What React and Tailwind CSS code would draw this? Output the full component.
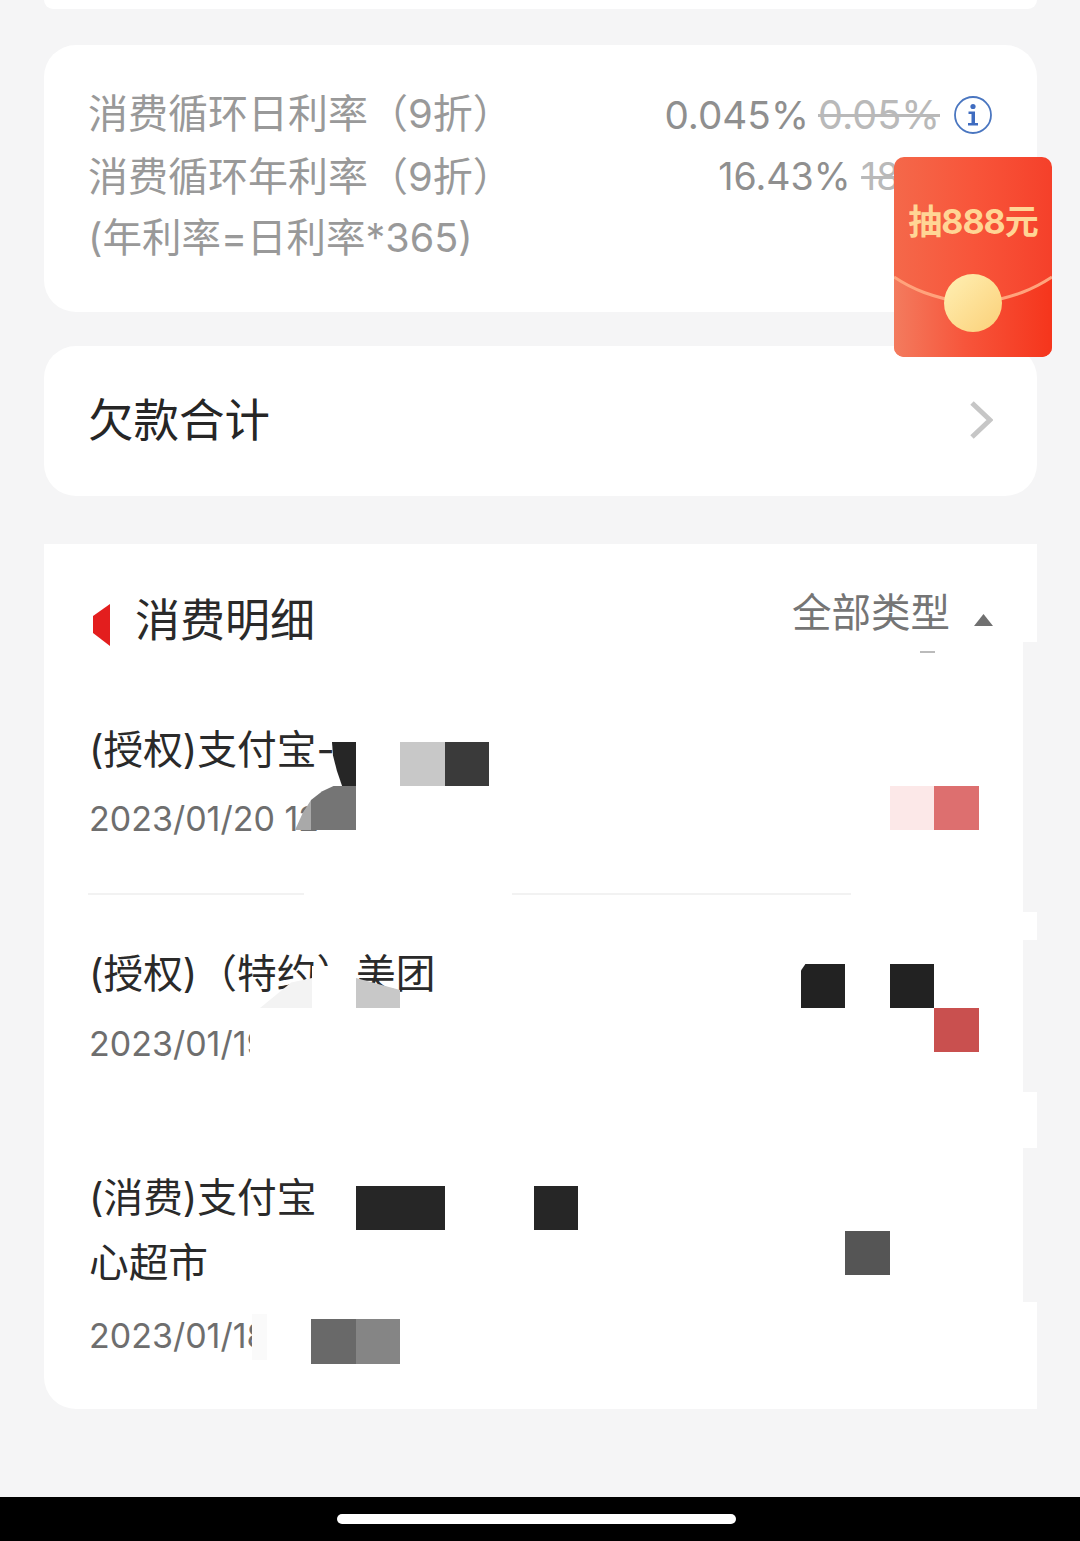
import React from 'react';

const cjk = "font-['Inter','Noto_Sans_CJK_SC',sans-serif]";

// Mosaic patches painted over the private parts of the list (page coordinates minus section origin)
const patches = [
  'left-[288px] top-[198px] w-[24px] h-[44px] bg-[#262626] [clip-path:polygon(0_0,100%_0,100%_100%,42%_100%,20%_65%,4%_30%)]',
  'left-[251px] top-[242px] w-[16px] h-[44px] bg-[#a9a9a9] [clip-path:polygon(0_100%,50%_60%,100%_32%,100%_100%)]',
  'left-[267px] top-[242px] w-[45px] h-[44px] bg-[#757575] [clip-path:polygon(0_32%,25%_12%,50%_0,100%_0,100%_100%,0_100%)]',
  'left-[356px] top-[198px] w-[45px] h-[44px] bg-[#c8c8c8]',
  'left-[401px] top-[198px] w-[44px] h-[44px] bg-[#3a3a3a]',
  'left-[846px] top-[242px] w-[44px] h-[44px] bg-[#fce8e8]',
  'left-[890px] top-[242px] w-[45px] h-[44px] bg-[#dd6f6f]',
  'left-[260px] top-[349px] w-[208px] h-[2px] bg-white',
  'left-[216px] top-[434px] w-[52px] h-[30px] bg-[#f3f3f3] [clip-path:polygon(0_100%,60%_15%,100%_0,100%_100%)]',
  'left-[268px] top-[422px] w-[44px] h-[42px] bg-white',
  'left-[312px] top-[434px] w-[44px] h-[30px] bg-[#c8c8c8] [clip-path:polygon(0_0,100%_40%,100%_100%,0_100%)]',
  'left-[757px] top-[420px] w-[44px] h-[44px] bg-[#222222] [clip-path:polygon(10%_0,100%_0,100%_100%,0_100%,0_15%)]',
  'left-[846px] top-[420px] w-[44px] h-[44px] bg-[#222222]',
  'left-[890px] top-[464px] w-[45px] h-[44px] bg-[#c9504f]',
  'left-[206px] top-[478px] w-[120px] h-[48px] bg-white',
  'left-[312px] top-[642px] w-[89px] h-[44px] bg-[#262626]',
  'left-[490px] top-[642px] w-[44px] h-[44px] bg-[#262626]',
  'left-[801px] top-[687px] w-[45px] h-[44px] bg-[#555555]',
  'left-[208px] top-[770px] w-[15px] h-[46px] bg-[#fafafa]',
  'left-[223px] top-[770px] w-[44px] h-[46px] bg-white',
  'left-[267px] top-[775px] w-[45px] h-[45px] bg-[#696969]',
  'left-[312px] top-[775px] w-[44px] h-[45px] bg-[#858585]',
  'left-[876px] top-[107px] w-[15px] h-[2px] bg-[#bbbbbb]',
];

// Grey strips where the white card is cut back on its right edge
const strips = [
  'top-[98px] h-[270px]',
  'top-[396px] h-[152px]',
  'top-[604px] h-[154px]',
];

const RedPacket = () => (
  <div className="absolute left-[894px] top-[157px] w-[158px] h-[200px] rounded-[10px] overflow-hidden bg-gradient-to-r from-[#f4684a] via-[#f8553a] to-[#f5402a]">
    <div className={`${cjk} pt-[46px] text-center text-[34px] leading-[38px] font-bold tracking-[-1px] text-[#ffd595] whitespace-nowrap`}>抽888元</div>
    <svg className="absolute left-0 top-[110px]" width="158" height="90" viewBox="0 0 158 90">
      <defs>
        <linearGradient id="seal" x1="0" y1="0" x2="1" y2="1">
          <stop offset="0" stopColor="#fff0b4" />
          <stop offset="1" stopColor="#fbd078" />
        </linearGradient>
        <linearGradient id="flap" x1="0" y1="0" x2="1" y2="0">
          <stop offset="0" stopColor="#f37b5e" />
          <stop offset="0.45" stopColor="#f7553b" />
          <stop offset="1" stopColor="#f5351c" />
        </linearGradient>
      </defs>
      <path d="M0 10 C18 22 36 30 79 38 C122 30 140 22 158 10 V90 H0 Z" fill="url(#flap)" />
      <path d="M0 10 C18 22 36 30 79 38 C122 30 140 22 158 10" fill="none" stroke="#ffa37c" strokeWidth="3" />
      <circle cx="79" cy="36" r="29" fill="url(#seal)" />
    </svg>
  </div>
);

const InfoIcon = () => (
  <svg width="38" height="38" viewBox="0 0 38 38" className="shrink-0">
    <circle cx="19" cy="19" r="18" fill="none" stroke="#4a76c0" strokeWidth="1.8" />
    <circle cx="19" cy="10.5" r="2.6" fill="#3f6cc0" />
    <path d="M14.5 15.5 H21 V27 H24 V29.5 H14 V27 H17.5 V18 H14.5 Z" fill="#3f6cc0" />
  </svg>
);

const Row = ({ title, date, className, dateClass }) => (
  <div className={className}>
    {title.map((line) => (
      <div key={line} className="text-[39.7px] leading-[65px] text-[#2a2a2a] whitespace-nowrap">{line}</div>
    ))}
    <div className={`${dateClass} text-[34px] leading-[48px] text-[#6e6e6e] whitespace-nowrap`}>{date}</div>
  </div>
);

export default function App() {
  return (
    <div className={`${cjk} relative w-[1080px] h-[1541px] overflow-hidden bg-[#f5f5f6] flex flex-col`}>
      <div className="flex-1 pl-[44px] pr-[43px]">
        <div className="h-[9px] bg-white rounded-b-[24px]" />

        <div className="mt-[36px] h-[267px] rounded-[32px] bg-white pl-[44px] pr-[45px] pt-[37px] flex justify-between">
          <div className="text-[40px] leading-[63px] text-[#999999] whitespace-nowrap">
            <div>消费循环日利率（9折）</div>
            <div>消费循环年利率（9折）</div>
            <div className="text-[39.5px] leading-[61px]">(年利率=日利率*365)</div>
          </div>
          <div className="pt-[2px] leading-[62px] text-[#8f8f8f] whitespace-nowrap">
            <div className="flex items-center justify-end gap-[14px] text-[39.5px]">
              <span><span className="mr-[-2px] text-[38.7px]">0.045%</span> <span className="text-[#b9b9b9] line-through">0.05%</span></span>
              <InfoIcon />
            </div>
            <div className="text-right text-[37.5px]">16.43% <span className="text-[#b9b9b9] line-through">18.25%</span></div>
          </div>
        </div>

        <div className="mt-[34px] h-[150px] rounded-[32px] bg-white pl-[44px] pr-[44px] flex items-center justify-between">
          <span className="text-[45.5px] text-[#262626]">欠款合计</span>
          <svg width="24" height="38" viewBox="0 0 24 38" className="-mt-[2px]">
            <path d="M3 2 L21 19 L3 36" fill="none" stroke="#c6c6c6" strokeWidth="5" />
          </svg>
        </div>

        <section className="relative mt-[48px] h-[865px] bg-white rounded-bl-[32px] overflow-hidden">
          <div className="h-[150px] pl-[48px] pr-[44px] pt-[40px] flex justify-between">
            <div className="flex items-start gap-[25px]">
              <svg width="18" height="42" viewBox="0 0 18 42" className="mt-[20px]">
                <path d="M18 0 V42 L1 29 V12 Z" fill="#e31e1e" />
              </svg>
              <span className="mt-[1px] text-[45px] leading-[72px] text-[#2a2a2a]">消费明细</span>
            </div>
            <div className="flex items-start gap-[24px]">
              <span className="text-[39.5px] leading-[58px] text-[#757575]">全部类型</span>
              <svg width="19" height="13" viewBox="0 0 19 13" className="mt-[30px]">
                <path d="M9.5 0 L19 12 H0 Z" fill="#707070" />
              </svg>
            </div>
          </div>

          <Row className="pl-[45px] pt-[24px] h-[199px]" dateClass="mt-[12px]" title={['(授权)支付宝-']} date="2023/01/20 12" />
          <div className="ml-[44px] mr-[186px] h-[2px] bg-[#f2f2f2]" />
          <Row className="pl-[45px] pt-[47px] h-[222px]" dateClass="mt-[13px]" title={['(授权)（特约）美团']} date="2023/01/19" />
          <Row className="pl-[45px] pt-[49px]" dateClass="mt-[16px]" title={['(消费)支付宝', '心超市']} date="2023/01/18" />

          {patches.map((cls) => (
            <div key={cls} className={`absolute ${cls}`} />
          ))}
          {strips.map((cls) => (
            <div key={cls} className={`absolute left-[979px] w-[14px] bg-[#f5f5f6] ${cls}`} />
          ))}
        </section>
      </div>

      <div className="h-[44px] bg-black flex items-center justify-center">
        <div className="mr-[7px] w-[399px] h-[10px] rounded-full bg-white" />
      </div>

      <RedPacket />
    </div>
  );
}
